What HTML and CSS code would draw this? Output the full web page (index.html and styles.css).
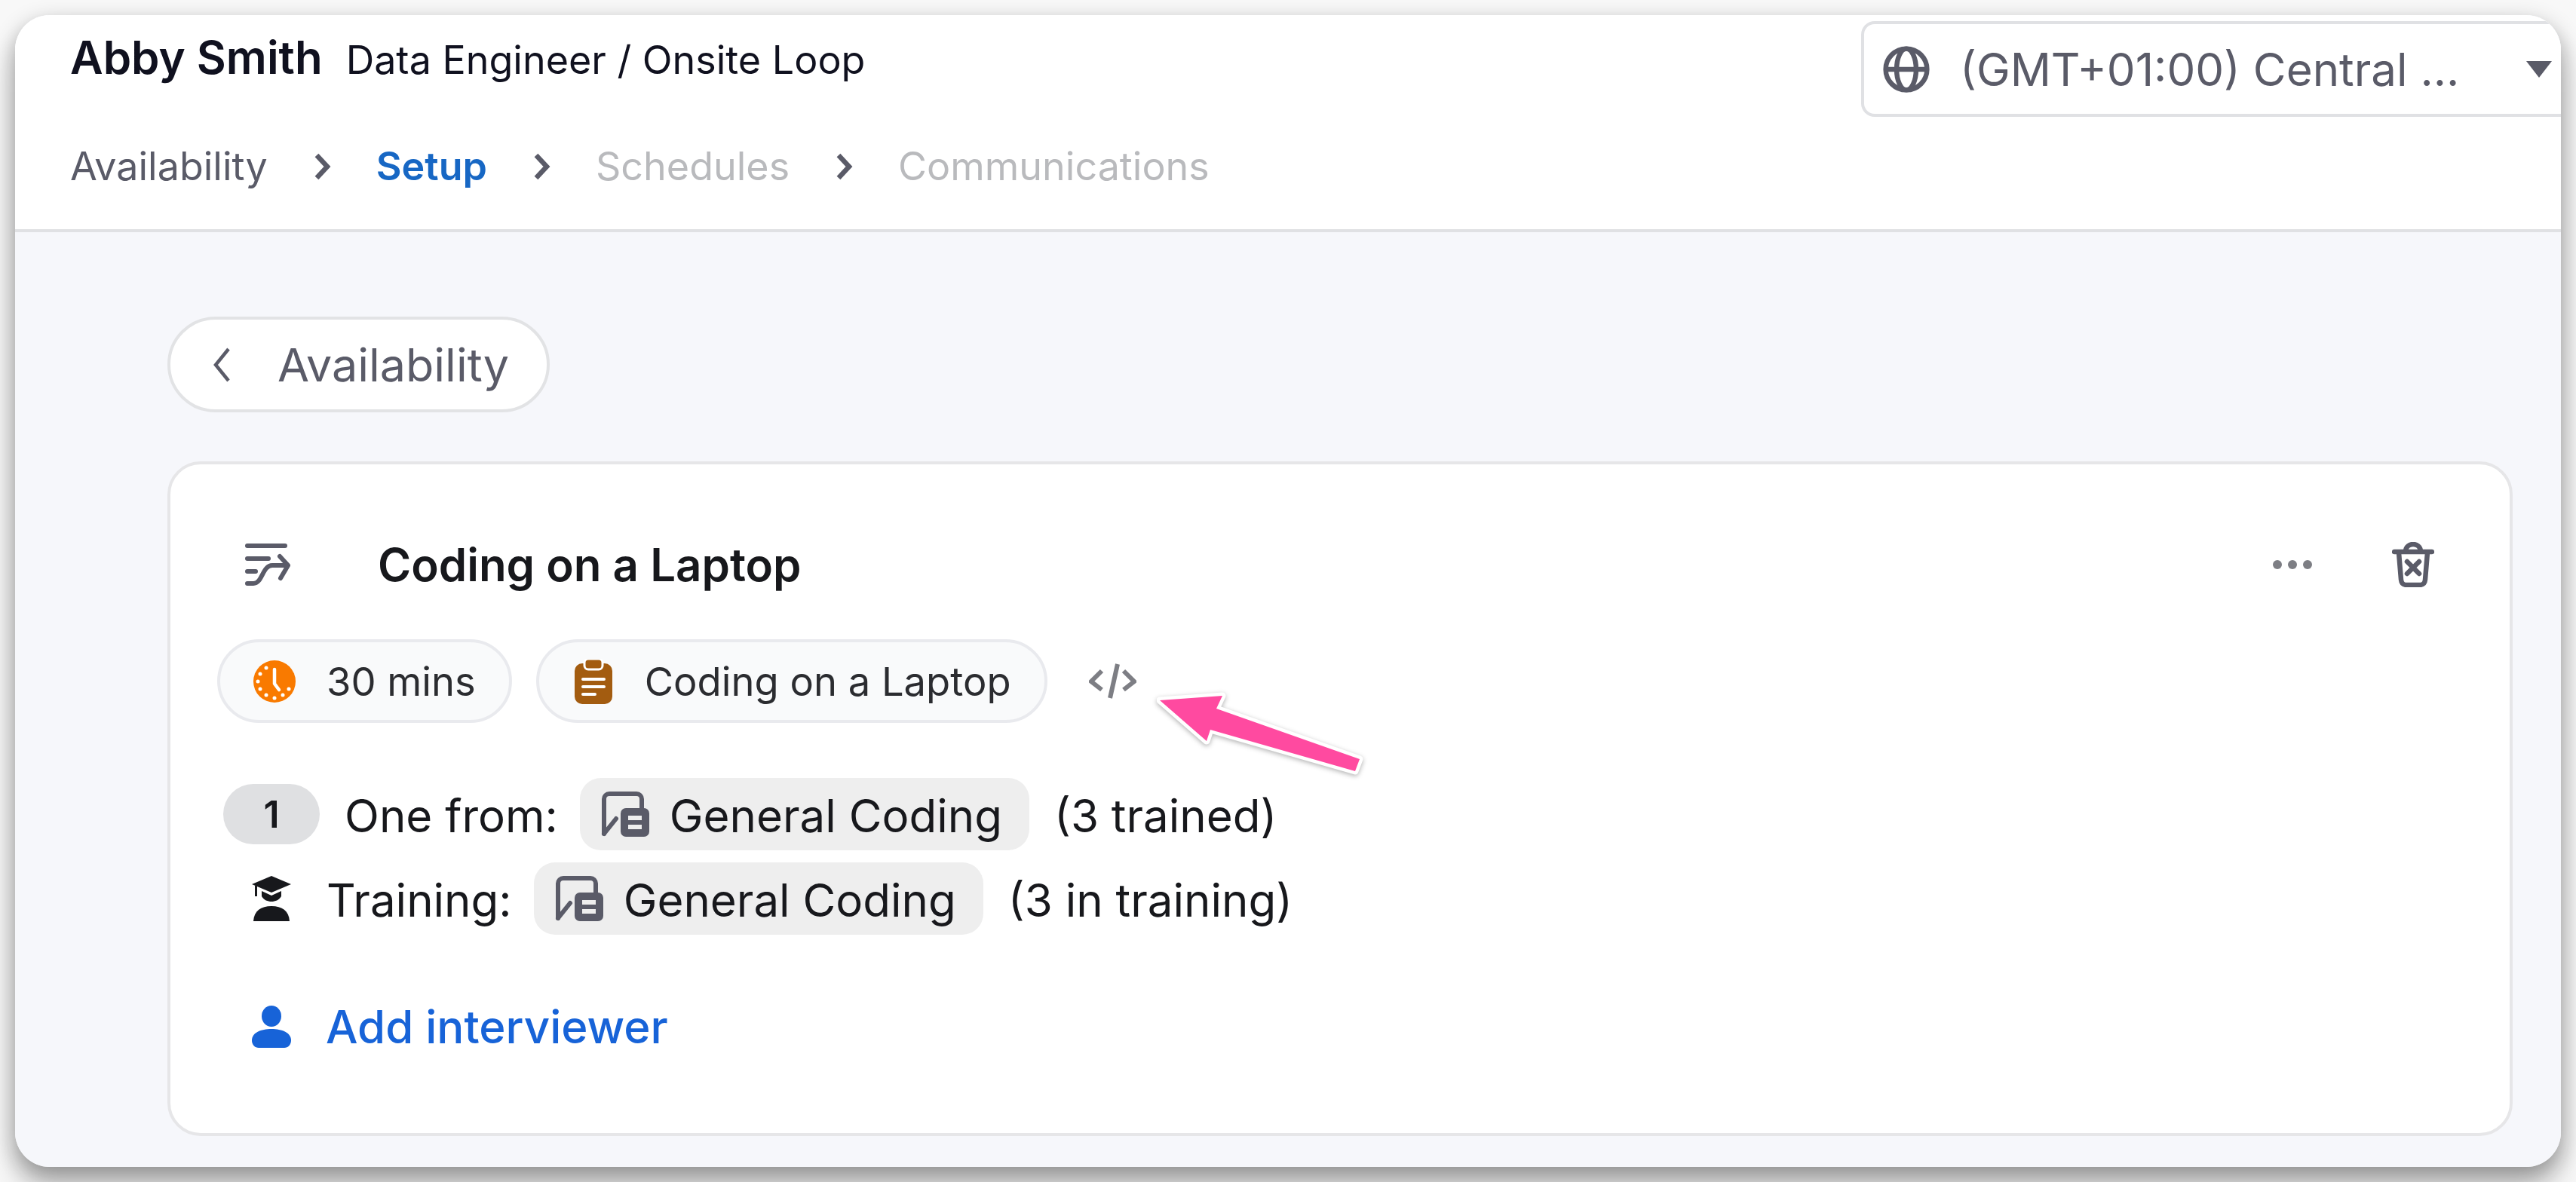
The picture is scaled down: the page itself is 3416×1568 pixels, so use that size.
FILE: index.html
```html
<!DOCTYPE html>
<html lang="en">
  <head>
    <meta charset="UTF-8" />
    <meta name="viewport" content="width=device-width, initial-scale=1.0" />
    <title>Abby Smith - Setup</title>
    <link rel="stylesheet" href="styles.css">
  </head>
  <body>
    <div class="window">
      <header class="top-bar">
        <div class="title-row">
          <div class="title">
            <h1>Abby Smith</h1>
            <span class="job">Data Engineer / Onsite Loop</span>
          </div>
          <div class="timezone">
            <svg class="globe" viewBox="0 0 24 24" fill="none" stroke="#5a5b68" stroke-width="2.5">
              <circle cx="12" cy="12" r="10.6" />
              <ellipse cx="12" cy="12" rx="5" ry="10.6" />
              <path d="M1.4 12h21.2" />
            </svg>
            <span class="timezone-text">(GMT+01:00) Central ...</span>
            <span class="caret"></span>
          </div>
        </div>
        <nav class="steps">
          <span class="step">Availability</span>
          <svg class="step-arrow" viewBox="0 0 24 36" fill="none" stroke="#5a5b68" stroke-width="6.500"><path d="M5 3l14 15L5 33" /></svg>
          <span class="step active">Setup</span>
          <svg class="step-arrow" viewBox="0 0 24 36" fill="none" stroke="#5a5b68" stroke-width="6.500"><path d="M5 3l14 15L5 33" /></svg>
          <span class="step muted">Schedules</span>
          <svg class="step-arrow" viewBox="0 0 24 36" fill="none" stroke="#5a5b68" stroke-width="6.500"><path d="M5 3l14 15L5 33" /></svg>
          <span class="step muted">Communications</span>
        </nav>
      </header>

      <main class="content">
        <button class="back-btn">
          <svg class="back-arrow" viewBox="0 0 24 48" fill="none" stroke="#5a5b68" stroke-width="4.500"><path d="M21 3L4 24l17 21" /></svg>
          <span>Availability</span>
        </button>

        <section class="card">
          <div class="card-head">
            <svg class="route-icon" viewBox="0 0 60 56" fill="none" stroke="#5a5b68" stroke-width="6" stroke-linecap="round">
              <path d="M3 3h50" />
              <path d="M3 20h28" />
              <path d="M3 37h11" />
              <path d="M3 53h8c12 0 12-24 25-24h18" />
              <path d="M46 17l11 12-10 17" stroke-linejoin="round" />
            </svg>
            <h2>Coding on a Laptop</h2>
            <div class="card-actions">
              <span class="dots"><i></i><i></i><i></i></span>
              <svg class="trash" viewBox="0 0 56 60" fill="none" stroke="#5a5b68" stroke-width="6.500" stroke-linecap="round" stroke-linejoin="round">
                <path d="M3 13h50" />
                <path d="M18 12c1-12 19-12 20 0" />
                <path d="M9 14l3 36c.5 5 3 7 8 7h16c5 0 7.500-2 8-7l3-36" />
                <path d="M20 26l16 16M36 26L20 42" />
              </svg>
            </div>
          </div>

          <div class="meta-row">
            <div class="meta-pill">
              <svg class="clock" viewBox="0 0 56 56">
                <circle cx="28" cy="28" r="28" fill="#f97a00" />
                <g fill="#fff">
                  <circle cx="17" cy="10" r="2.500" /><circle cx="9" cy="18" r="2.500" /><circle cx="6" cy="28" r="2.500" />
                  <circle cx="9" cy="38" r="2.500" /><circle cx="17" cy="46" r="2.500" /><circle cx="28" cy="50" r="2.500" />
                  <circle cx="39" cy="46" r="2.500" /><circle cx="47" cy="38" r="2.500" />
                </g>
                <path d="M28 12v19l6 8" fill="none" stroke="#fff" stroke-width="4.500" stroke-linecap="round" stroke-linejoin="round" />
              </svg>
              <span>30 mins</span>
            </div>
            <div class="meta-pill wide">
              <svg class="clipboard" viewBox="0 0 52 60">
                <rect x="1" y="6" width="50" height="54" rx="10" fill="#a35c10" />
                <rect x="14" y="0" width="24" height="14" rx="5" fill="#a35c10" stroke="#fff" stroke-width="3" />
                <path d="M12 27h28M12 37h28M12 47h16" stroke="#fff" stroke-width="4" stroke-linecap="round" />
              </svg>
              <span>Coding on a Laptop</span>
            </div>
            <svg class="code-icon" viewBox="0 0 63 47" fill="none" stroke="#7d7e84" stroke-width="6">
              <path d="M17 10L3 24l14 11" />
              <path d="M38 1L28 46" />
              <path d="M46 10l14 14-14 11" />
            </svg>
          </div>

          <div class="people-row first">
            <span class="count">1</span>
            <span class="label">One from:</span>
            <span class="chip">
              <svg class="group-icon" viewBox="0 0 64 60">
                <path d="M4 56V10c0-4 3-7 7-7h36c4 0 7 3 7 7v12" fill="none" stroke="#5a5b68" stroke-width="6" stroke-linecap="round" />
                <path d="M4 56l16-20" fill="none" stroke="#5a5b68" stroke-width="6" stroke-linecap="round" />
                <rect x="26" y="22" width="38" height="38" rx="7" fill="#5a5b68" />
                <path d="M36 35h18M36 47h18" stroke="#eee" stroke-width="6" />
              </svg>
              <span>General Coding</span>
            </span>
            <span class="note">(3 trained)</span>
          </div>

          <div class="people-row second">
            <svg class="cap-icon" viewBox="0 0 52 60" fill="#17181c">
              <path d="M26 0l26 11-26 11L0 11z" />
              <path d="M13 20l13 6 13-6v7c-3 5-8 7-13 7s-10-2-13-7z" />
              <path d="M4 13h3v14H4z" />
              <path d="M2 60c1-14 10-20 24-20s23 6 24 20z" />
            </svg>
            <span class="label">Training:</span>
            <span class="chip">
              <svg class="group-icon" viewBox="0 0 64 60">
                <path d="M4 56V10c0-4 3-7 7-7h36c4 0 7 3 7 7v12" fill="none" stroke="#5a5b68" stroke-width="6" stroke-linecap="round" />
                <path d="M4 56l16-20" fill="none" stroke="#5a5b68" stroke-width="6" stroke-linecap="round" />
                <rect x="26" y="22" width="38" height="38" rx="7" fill="#5a5b68" />
                <path d="M36 35h18M36 47h18" stroke="#eee" stroke-width="6" />
              </svg>
              <span>General Coding</span>
            </span>
            <span class="note">(3 in training)</span>
          </div>

          <a class="add-link">
            <svg class="person-icon" viewBox="0 0 52 56" fill="#1763d8">
              <ellipse cx="26" cy="14" rx="13" ry="14" />
              <path d="M0 46c0-10 12-15 26-15s26 5 26 15c0 6-4 10-9 10H9c-5 0-9-4-9-10z" />
            </svg>
            <span>Add interviewer</span>
          </a>
        </section>
      </main>

      <svg class="pink-arrow" viewBox="0 0 300 130">
        <path d="M4 15L87 9 79 26 269 93 263 109 71 54 66 69z" fill="#ff4aa0" stroke="#fff" stroke-width="9" stroke-linejoin="round" paint-order="stroke" />
      </svg>
    </div>
  </body>
</html>
```

FILE: styles.css
```css
* {
  box-sizing: border-box;
}

body {
  margin: 0;
  height: 1568px;
  padding: 20px;
  overflow: hidden;
  background-color: #f8f8f8;
  font-family: Inter, "Liberation Sans", sans-serif;
}

.window {
  position: relative;
  height: 1528px;
  border-radius: 46px;
  overflow: hidden;
  background-color: #f6f7fb;
}

body::before {
  content: "";
  position: fixed;
  left: 20px;
  top: 20px;
  width: 3376px;
  height: 1528px;
  border-radius: 46px;
  box-shadow: 0 10px 30px rgba(0, 0, 0, 0.3), 0 30px 40px rgba(0, 0, 0, 0.2);
}

.top-bar {
  height: 288px;
  padding: 8px 0 0 73px;
  background-color: #ffffff;
  border-bottom: 4px solid #e0e1e4;
}

.title-row {
  display: flex;
  justify-content: space-between;
  align-items: flex-start;
}

.title {
  display: flex;
  align-items: baseline;
  gap: 31px;
  margin-top: 12px;
}

h1 {
  margin: 0;
  font-size: 60px;
  font-weight: 600;
  color: #10111f;
}

.job {
  font-size: 52px;
  color: #10111f;
}

.timezone {
  display: flex;
  align-items: center;
  width: 928px;
  height: 127px;
  padding-left: 25px;
  border: 4px solid #e0e1e4;
  border-right: none;
  border-radius: 18px 0 0 18px;
}

.globe {
  width: 62px;
  height: 62px;
}

.timezone-text {
  margin-left: 40px;
  font-size: 60px;
  color: #5a5b68;
}

.caret {
  width: 0;
  height: 0;
  margin-left: 89px;
  border-left: 17px solid transparent;
  border-right: 17px solid transparent;
  border-top: 22px solid #5a5b68;
}

.steps {
  display: flex;
  align-items: center;
  margin-top: 34px;
}

.step {
  font-size: 52px;
  color: #5a5b68;
}

.step.active {
  color: #1767c4;
  font-weight: 600;
}

.step.muted {
  color: #b9babd;
}

.step-arrow {
  width: 24px;
  height: 36px;
  margin: 0 60px;
}

.content {
  padding: 112px 64px 0 202px;
}

.back-btn {
  display: flex;
  align-items: center;
  width: 507px;
  height: 127px;
  padding: 0 0 0 56px;
  border: 4px solid #e2e3e5;
  border-radius: 64px;
  background-color: #ffffff;
  font-family: inherit;
  font-size: 61px;
  color: #5a5b68;
}

.back-arrow {
  width: 24px;
  height: 48px;
  margin-right: 62px;
}

.card {
  height: 895px;
  margin-top: 65px;
  padding: 32px 0 0 62px;
  border: 4px solid #e6e6e8;
  border-radius: 44px;
  background-color: #ffffff;
}

.card-head {
  display: flex;
  align-items: center;
  height: 200px;
  padding: 2px 100px 0 37px;
}

.route-icon {
  width: 60px;
  height: 56px;
}

h2 {
  margin: 0 0 0 116px;
  font-size: 60px;
  font-weight: 600;
  color: #17181c;
}

.card-actions {
  display: flex;
  align-items: center;
  gap: 106px;
  margin-left: auto;
}

.dots {
  display: flex;
  gap: 8px;
}

.dots i {
  width: 12px;
  height: 12px;
  border-radius: 50%;
  background-color: #7d7e84;
}

.trash {
  width: 56px;
  height: 60px;
}

.meta-row {
  display: flex;
  align-items: center;
  height: 111px;
}

.meta-pill {
  display: flex;
  align-items: center;
  height: 111px;
  padding: 0 44px;
  border: 4px solid #e9eaee;
  border-radius: 56px;
  background-color: #f9fafb;
  font-size: 52.500px;
  color: #2b2c30;
}

.meta-pill.wide {
  margin-left: 32px;
  padding-left: 46px;
}

.clock {
  width: 56px;
  height: 56px;
  margin-right: 41px;
}

.clipboard {
  width: 52px;
  height: 60px;
  margin-right: 42px;
}

.code-icon {
  width: 63px;
  height: 47px;
  margin-left: 55px;
}

.people-row {
  display: flex;
  align-items: center;
  height: 96px;
  font-size: 60px;
  color: #17181c;
}

.people-row.first {
  margin-top: 73px;
  padding-left: 8px;
}

.people-row.second {
  margin-top: 16px;
  padding-left: 46px;
}

.label,
.note,
.chip span {
  padding-top: 3px;
}

.count {
  display: flex;
  justify-content: center;
  align-items: center;
  width: 128px;
  height: 80px;
  margin-right: 33px;
  border-radius: 40px;
  background-color: #dfe0e2;
  font-size: 50px;
  font-weight: 600;
}

.cap-icon {
  width: 52px;
  height: 60px;
  margin-right: 47px;
}

.chip {
  display: flex;
  align-items: center;
  height: 96px;
  margin-left: 29px;
  padding: 0 36px 0 28px;
  border-radius: 28px;
  background-color: #eeeeee;
}

.group-icon {
  width: 64px;
  height: 60px;
  margin-right: 27px;
}

.note {
  margin-left: 33px;
}

.add-link {
  display: flex;
  align-items: center;
  margin: 86px 0 0 46px;
  font-size: 60px;
  font-weight: 500;
  color: #1763d8;
}

.person-icon {
  width: 52px;
  height: 56px;
  margin-right: 46px;
}

.pink-arrow {
  position: absolute;
  left: 1514px;
  top: 894px;
  width: 300px;
  height: 130px;
  filter: drop-shadow(0 2px 3px rgba(0, 0, 0, 0.3));
}
```
